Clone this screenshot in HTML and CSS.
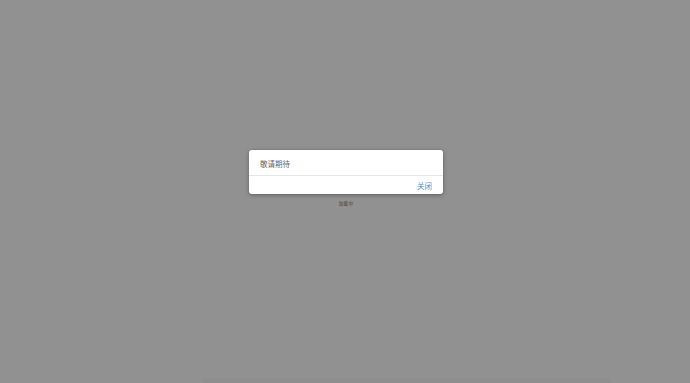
FILE: index.html
```html
<!DOCTYPE html>
<html lang="zh">
<head>
<meta charset="utf-8">
<link rel="stylesheet" href="styles.css">
</head>
<body>
<div class="page">
  <div class="stack">
    <div class="dialog">
      <div class="dialog-body">敬请期待</div>
      <div class="dialog-foot"><span class="btn">关闭</span></div>
    </div>
    <div class="loading">加载中</div>
  </div>
  <div class="bottom-bar"></div>
</div>
</body>
</html>
```
FILE: styles.css
```css
html, body {
  margin: 0;
  padding: 0;
  height: 100%;
  background: #919191;
  font-family: "Noto Sans CJK SC", "Noto Sans", sans-serif;
}
.page {
  height: 383px;
  display: flex;
  flex-direction: column;
  align-items: center;
  box-sizing: border-box;
  padding-top: 150px;
  padding-left: 2px;
}
.stack {
  display: flex;
  flex-direction: column;
  align-items: center;
  flex: 1;
}
.dialog {
  width: 194px;
  height: 44px;
  background: #fff;
  border-radius: 3px;
  box-shadow: 0 1px 4px rgba(0,0,0,0.35);
  display: flex;
  flex-direction: column;
  overflow: hidden;
}
.dialog-body {
  height: 26px;
  box-sizing: border-box;
  padding-left: 11px;
  padding-top: 1px;
  display: flex;
  align-items: center;
  font-size: 7.5px;
  color: #666;
  border-bottom: 1px solid #e6e6e6;
}
.dialog-foot {
  flex: 1;
  display: flex;
  align-items: center;
  justify-content: flex-end;
  padding-right: 11px;
}
.btn {
  font-size: 7.5px;
  color: #3a8fd6;
}
.loading {
  margin-top: 6px;
  font-size: 4.5px;
  color: #3a3a3a;
  letter-spacing: 0.3px;
}
.bottom-bar {
  width: 408px;
  height: 5px;
  background: #8e8e8e;
  margin-left: 122px;
}
```
